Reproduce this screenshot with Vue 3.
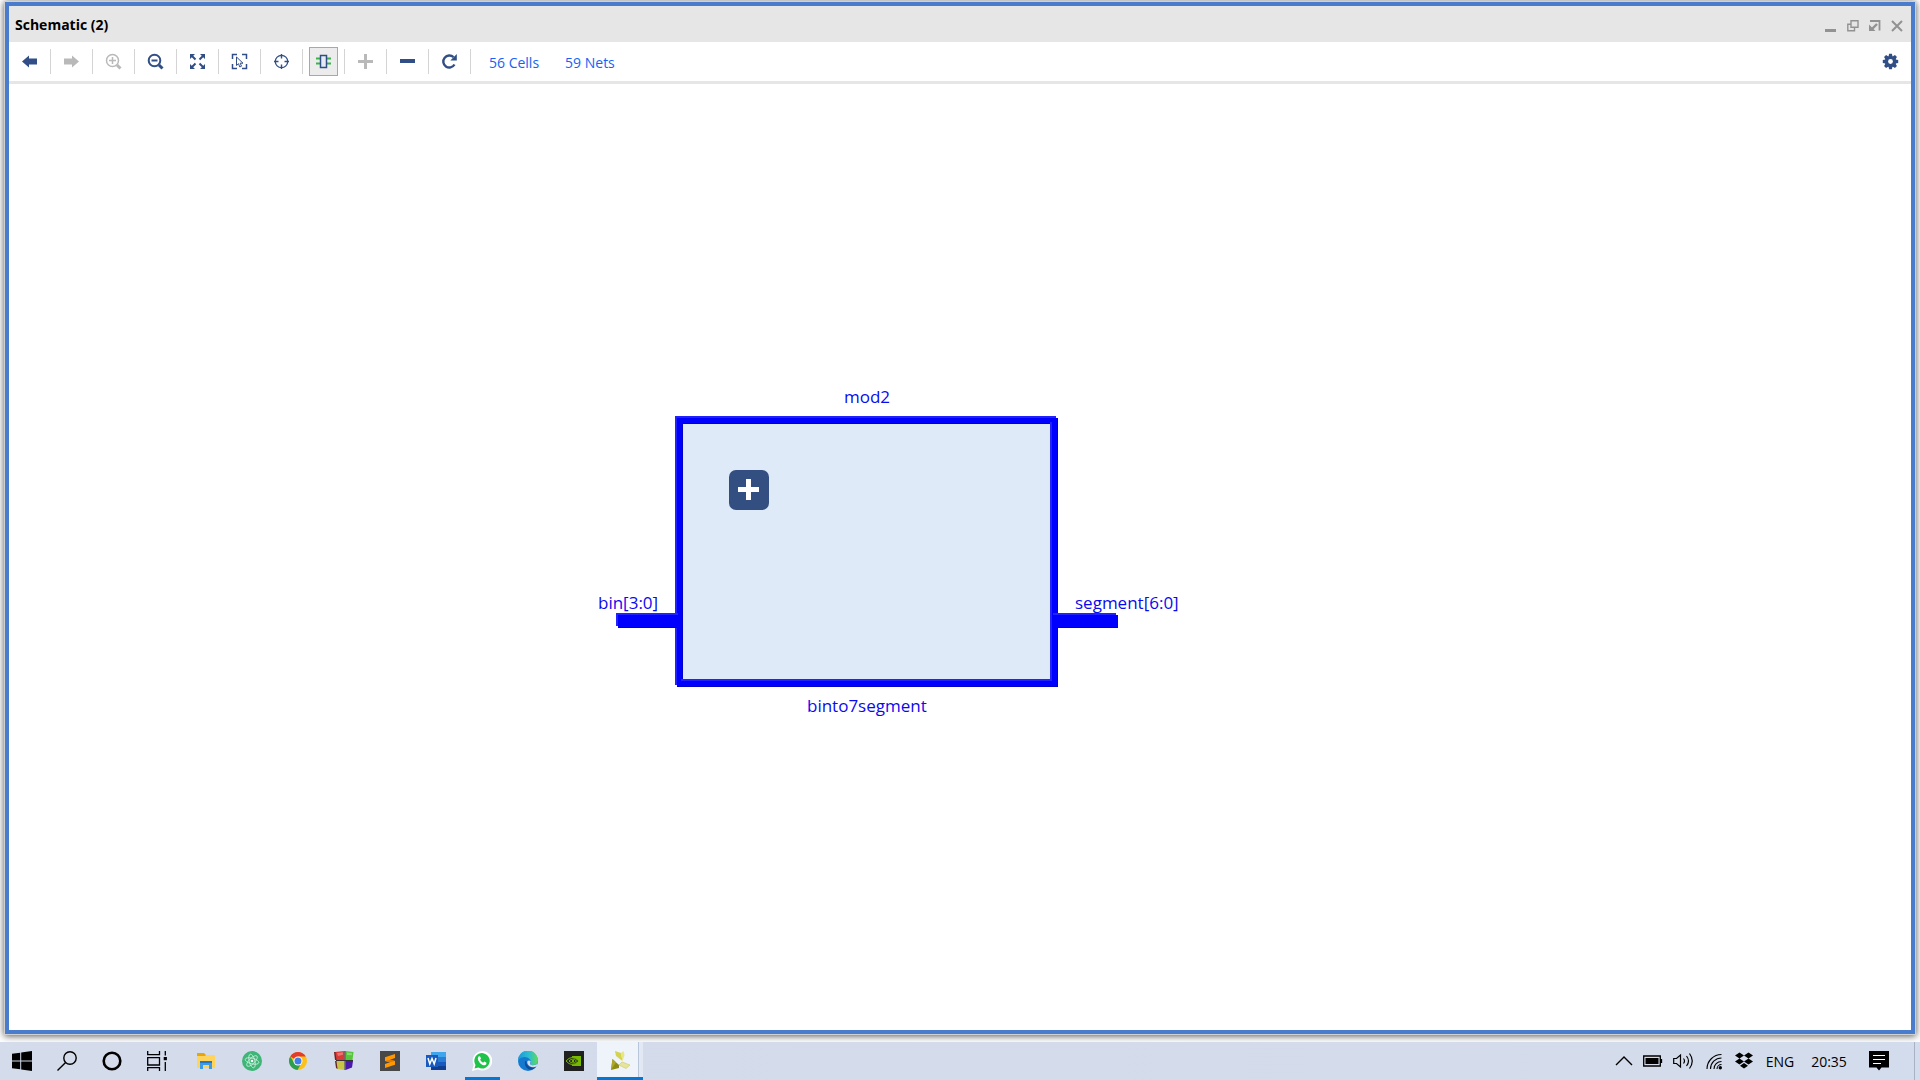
<script setup>
const tools = [
  { id: 'back', label: 'Back' },
  { id: 'forward', label: 'Forward', disabled: true },
  { id: 'zoom-in', label: 'Zoom in', disabled: true },
  { id: 'zoom-out', label: 'Zoom out' },
  { id: 'fit', label: 'Zoom fit' },
  { id: 'select', label: 'Zoom to selection' },
  { id: 'center', label: 'Autofit selection' },
  { id: 'cell', label: 'Expand cell', active: true },
  { id: 'plus', label: 'Add', disabled: true },
  { id: 'minus', label: 'Remove' },
  { id: 'reload', label: 'Regenerate' },
]

const apps = [
  { id: 'explorer', label: 'File Explorer' },
  { id: 'atom', label: 'Atom' },
  { id: 'chrome', label: 'Chrome' },
  { id: 'cube', label: 'Blocks' },
  { id: 'sublime', label: 'Sublime Text' },
  { id: 'word', label: 'Word' },
  { id: 'whatsapp', label: 'WhatsApp', running: true },
  { id: 'edge', label: 'Edge' },
  { id: 'nvidia', label: 'NVIDIA' },
  { id: 'vivado', label: 'Vivado', current: true },
]
</script>

<template>
  <div class="desktop">
    <main class="window">
      <header class="titlebar">
        <h1>Schematic (2)</h1>
        <div class="controls">
          <button aria-label="Minimize"><svg width="12" height="12"><path d="M0 10.500h11" stroke="#929292" stroke-width="3" /></svg></button>
          <button aria-label="Restore"><svg width="12" height="12" fill="none" stroke="#929292" stroke-width="1.400"><path d="M4 .8h7v6.500H4zM7.500 7.300v3.400H.8V4.200H4" /></svg></button>
          <button aria-label="Float"><svg width="12" height="12" fill="none" stroke="#929292"><path d="M1 1h9.500v9.500" stroke-width="1.800" /><path d="M8 4L3 9" stroke-width="2.400" /><path d="M0 4.500V11h6.500z" fill="#929292" stroke="none" /></svg></button>
          <button aria-label="Close"><svg width="12" height="12"><path d="M1 1l10 10M11 1L1 11" stroke="#929292" stroke-width="2" /></svg></button>
        </div>
      </header>

      <div class="toolbar">
        <div v-for="t in tools" :key="t.id" class="slot">
          <button class="tool" :class="{ active: t.active, disabled: t.disabled }" :aria-label="t.label" :disabled="t.disabled">
            <svg width="17" height="17" viewBox="0 0 17 17" fill="none" stroke="currentColor">
              <path v-if="t.id === 'back'" d="M1 8.500L8 2.500V5.500H16V11.500H8V14.500Z" fill="currentColor" stroke="none" />
              <path v-else-if="t.id === 'forward'" d="M16 8.500L9 2.500V5.500H1V11.500H9V14.500Z" fill="currentColor" stroke="none" />
              <template v-else-if="t.id === 'zoom-in'">
                <circle cx="7.500" cy="7.500" r="6" stroke-width="1.500" />
                <path d="M4 7.500h7M7.500 4v7" stroke-width="1.500" /><path d="M12 12l3.500 3.500" stroke-width="3" />
              </template>
              <template v-else-if="t.id === 'zoom-out'">
                <circle cx="7.500" cy="7.500" r="5.800" stroke-width="2" />
                <path d="M4.500 7.500h6" stroke-width="2" /><path d="M12 12l3.500 3.500" stroke-width="3" />
              </template>
              <template v-else-if="t.id === 'fit'">
                <path d="M1 1h5L1 6zM16 1v5L11 1zM1 16v-5l5 5zM16 16h-5l5-5z" fill="currentColor" stroke="none" />
                <path d="M2 2l4.500 4.500M15 2l-4.500 4.500M2 15l4.500-4.500M15 15l-4.500-4.500" stroke-width="2" />
              </template>
              <template v-else-if="t.id === 'select'">
                <path d="M1.500 6V1.500H6M11 1.500h4.500V6M15.500 11v4.500H11M6 15.500H1.500V11" stroke-width="1.500" />
                <path d="M5.500 4v8.500l2-1.800 1.300 3.300 1.700-.8-1.300-3H12z" fill="#fff" stroke-width="1" />
              </template>
              <template v-else-if="t.id === 'center'">
                <circle cx="8.500" cy="8.500" r="6.200" stroke-width="1.300" />
                <path d="M8.500 1v4.500M8.500 11.500V16M1 8.500h4.500M11.500 8.500H16" stroke-width="1.400" />
              </template>
              <template v-else-if="t.id === 'cell'">
                <path d="M1 5.500h4M1 10.500h4M12 5.500h4M12 10.500h4" stroke="#38b54a" stroke-width="2" />
                <path d="M5.500 2.500h6v12h-6z" fill="#e5eaf3" stroke-width="1.500" />
              </template>
              <path v-else-if="t.id === 'plus'" d="M1 8.500h15M8.500 1v15" stroke-width="3" />
              <path v-else-if="t.id === 'minus'" d="M1 8h15" stroke-width="4" />
              <template v-else>
                <path d="M13.500 11.500A6 6 0 1 1 12.500 4.200" stroke-width="2.400" />
                <path d="M15.800 1v6.500H9.300z" fill="currentColor" stroke="none" />
              </template>
            </svg>
          </button>
        </div>
        <nav class="stats">
          <a href="#cells">56 Cells</a>
          <a href="#nets">59 Nets</a>
        </nav>
        <button class="tool settings" aria-label="Settings">
          <svg width="17" height="17" viewBox="-8.500 -8.500 17 17">
            <g fill="currentColor">
              <path v-for="a in [0, 45, 90, 135]" :key="a" d="M-2-5l.6-2.700h2.800L2-5V5l-.6 2.700h-2.800L-2 5z" :transform="`rotate(${a})`" />
              <circle r="5.600" />
            </g>
            <circle r="2.400" fill="#fff" />
          </svg>
        </button>
      </div>

      <section class="canvas">
        <svg class="module" width="520" height="284" viewBox="598 410 520 284">
          <rect x="681" y="422" width="371" height="259" fill="#dfeaf8" />
          <path d="M675 416H1056V418H1058V687H677V685H675ZM683 424V679H1050V424Z" fill="#00f" fill-rule="evenodd" />
          <path d="M616 613H678V628H618V626H616ZM1053 613H1116V615H1118V628H1053Z" fill="#00f" />
          <path d="M675 417H1056M676 416V613M676 628V685M1051 422V679M681 680H1052M616 614H678M617 613V626M1053 614H1116" stroke="#2222ff" stroke-width="2" />
          <path d="M683 423.500H1050M682.500 424V679M1057.500 418V613M1057.500 628V687M677 686.500H1058M618 627.500H677M1058 627.500H1118" stroke="#0000cd" />
        </svg>
        <button class="expand" aria-label="Expand mod2"></button>
        <span class="label instance">mod2</span>
        <span class="label input">bin[3:0]</span>
        <span class="label output">segment[6:0]</span>
        <span class="label type">binto7segment</span>
      </section>
    </main>

    <footer class="taskbar">
      <div class="system">
        <button aria-label="Start"><svg width="20" height="20"><path d="M0 2.800L8.200 1.700V9.400H0zM9.200 1.500L20 0V9.400H9.200zM0 10.500H8.200V18.300L0 17.200zM9.200 10.500H20V20L9.200 18.500z" /></svg></button>
        <button aria-label="Search"><svg width="20" height="20" fill="none" stroke="#000" stroke-width="1.400"><circle cx="13" cy="7" r="6.200" /><path d="M8.600 11.400L.5 19.500" /></svg></button>
        <button aria-label="Cortana"><svg width="20" height="20"><circle cx="10" cy="10" r="8.300" fill="none" stroke="#000" stroke-width="2.600" /></svg></button>
        <button aria-label="Task View"><svg width="20" height="20" fill="none" stroke="#000" stroke-width="1.300"><path d="M.7 0V3.700H12.500V0M.7 6.700H12.500V14H.7zM.7 20V16.700H12.500V20M18.300 0V4.500M18.300 11V20" /><path d="M16.700 6h3.200v3.200h-3.200z" fill="#000" stroke="none" /></svg></button>
      </div>
      <div class="apps">
        <button v-for="a in apps" :key="a.id" :aria-label="a.label" :class="{ running: a.running, current: a.current }">
          <svg width="20" height="20" viewBox="0 0 20 20">
            <template v-if="a.id === 'explorer'">
              <path d="M1 2h7l2 2h9v6H1z" fill="#e5a50c" /><path d="M1 5h8l1-1h9v13H1z" fill="#ffd45c" />
              <path d="M4 10h12v8h-3v-4H7v4H4z" fill="#3b9be5" /><path d="M4 10h12v2H4z" fill="#2478c7" />
            </template>
            <template v-else-if="a.id === 'atom'">
              <circle cx="10" cy="10" r="10" fill="#3fb578" />
              <g fill="none" stroke="#c9f0da" stroke-width=".8"><ellipse v-for="r in [15, 75, 135]" :key="r" cx="10" cy="10" rx="7" ry="2.800" :transform="`rotate(${r} 10 10)`" /></g>
              <circle cx="10" cy="10" r="1.300" fill="#fff" />
            </template>
            <template v-else-if="a.id === 'chrome'">
              <circle cx="10" cy="10" r="9" fill="#fbc116" />
              <path d="M10 10L2.200 5.500A9 9 0 0 1 17.800 5.500H10z" fill="#e33b2e" />
              <path d="M2.200 5.500A9 9 0 0 0 9.500 19L13.500 12L10 10L6.300 12z" fill="#2b9f4c" />
              <circle cx="10" cy="10" r="4.500" fill="#fff" /><circle cx="10" cy="10" r="3.500" fill="#3f7ee8" />
            </template>
            <template v-else-if="a.id === 'cube'">
              <path d="M1 1l9.500-1v9H2z" fill="#d93a36" /><path d="M11.500 0l8 1-1 8h-7z" fill="#55c53c" />
              <path d="M2 10h8.500v9L3 18z" fill="#c8c445" /><path d="M11.500 10h7.500l-1 6.500-6.500 2.500z" fill="#4b18ad" />
              <path d="M0 1h1.500l1 8H1zM1 10h1.500l1 8L2 17z" fill="#6b2421" /><path d="M10.500 0h1v19h-1zM2 9h17v1H2z" fill="#333" />
              <path d="M3 2l6-.7v2.500L4 5zM13 1.500l5 .7v2L13 4z" fill="#fff" opacity=".3" />
            </template>
            <template v-else-if="a.id === 'sublime'">
              <path d="M0 0h20v20H0z" fill="#484848" />
              <path d="M15 3v4l-5 1.700 5 1.300v3.800L5 17v-4l5-1.700L5 10V6.200z" fill="#ff9800" />
              <path d="M5 10l5 1.300 5-1.300-5-1.300z" fill="#df7900" />
            </template>
            <template v-else-if="a.id === 'word'">
              <path d="M5 1h15v5H5z" fill="#41a5ee" /><path d="M5 6h15v5H5z" fill="#2b7cd3" /><path d="M5 11h15v4H5z" fill="#185abd" /><path d="M5 15h15v4H5z" fill="#103f91" />
              <path d="M0 4h12v12H0z" fill="#185abd" /><path d="M2 7l1.800 6L6 7.500 8.200 13 10 7" fill="none" stroke="#fff" stroke-width="1.500" />
            </template>
            <template v-else-if="a.id === 'whatsapp'">
              <path d="M1 19l1.500-5A9 9 0 1 1 6 17.600z" fill="#fff" stroke="#fff" stroke-width="1.500" />
              <path d="M2.500 17.500l1-3.600a7.700 7.700 0 1 1 2.900 2.700z" fill="#20c34a" />
              <path d="M6.500 5.500q1-.8 1.700.3l.8 1.700-.9 1.300q1 2 3 2.900l1.200-1.200 2.200 1.200q.3 2-2 2.500Q9 14.500 6.300 9.500 5.200 7 6.500 5.500z" fill="#fff" />
            </template>
            <template v-else-if="a.id === 'edge'">
              <defs>
                <linearGradient id="edge-top"><stop offset="0" stop-color="#2196d9" /><stop offset=".55" stop-color="#2bbfd0" /><stop offset="1" stop-color="#62d957" /></linearGradient>
              </defs>
              <circle cx="10" cy="10" r="10" fill="#147ad0" />
              <path d="M0 10a10 10 0 0 1 20-1q0 5-5 5-3 0-3-1.500 1.500-1 .5-3.500Q10 5.500 6 6 1.500 6.700 0 10z" fill="url(#edge-top)" />
              <path d="M7 10q-1 6 4 8.500 4 1 7.500-3-4 2-7.500 0-3-2-2.500-5z" fill="#0b4c9c" />
              <path d="M12 12q-.5 2 2.500 2.300 3 .2 5.500-1.800l-1.300 2.800q-3.700 2-7 0Q8.500 13 9.500 10q1.500-1 3 0 .5 1-.5 2z" fill="#d6dded" />
            </template>
            <template v-else-if="a.id === 'nvidia'">
              <path d="M0 0h20v20H0z" fill="#202020" /><path d="M8 5h9v10H8z" fill="#76b900" />
              <path d="M2 10Q8 3 15 10 8 17 2 10z" fill="#202020" stroke="#76b900" />
              <path d="M5 10q4-4 7.500 0Q9 14 5 10z" fill="none" stroke="#76b900" /><circle cx="9" cy="10" r="1.200" fill="#76b900" />
            </template>
            <template v-else>
              <path d="M5 0l6 2 1.500 8L6 5z" fill="#d4d34e" /><path d="M11 2l2.500-2L14.500 4 12.500 10z" fill="#e8e583" />
              <path d="M2.500 8L9 14v3l-8 2z" fill="#8e8c10" /><path d="M2.500 8l3.500 3.500L1 19z" fill="#aaa82a" />
              <path d="M9 14l3-3 8 3-4 3.500z" fill="#e7e59b" stroke="#cbc865" stroke-width=".6" />
            </template>
          </svg>
        </button>
      </div>
      <div class="tray">
        <button aria-label="Show hidden icons"><svg width="18" height="20"><path d="M1 14l8-8 8 8" fill="none" stroke="#000" stroke-width="1.400" /></svg></button>
        <button aria-label="Battery"><svg width="20" height="20"><path d="M.7 5h16.600v10H.7zM18.500 8v4" fill="none" stroke="#000" stroke-width="1.300" /><path d="M2.500 7h13v6h-13z" /></svg></button>
        <button aria-label="Volume"><svg width="21" height="20" fill="none" stroke="#000" stroke-width="1.200"><path d="M.7 7.500h2.800L7.500 4v12L3.500 12.500H.7zM10.500 7.500q2 2.500 0 5M13.500 5q4 5 0 10M16.500 2.500q5.500 7.500 0 15" /></svg></button>
        <button aria-label="Network"><svg width="20" height="20" fill="none" stroke="#000" stroke-width="1.100"><path d="M3 18A14.500 14.500 0 0 1 17.500 3.500M6.500 18A11 11 0 0 1 17.500 7M10 18A7.500 7.500 0 0 1 17.500 10.500M13 18A4.500 4.500 0 0 1 17.500 13.500" /><circle cx="16.300" cy="16.700" r="1.700" fill="#000" stroke="none" /></svg></button>
        <button aria-label="Dropbox"><svg width="20" height="20"><path d="M5.500 1.500L10 4.500 5.500 7.500 1 4.500zM14.500 1.500L19 4.500 14.500 7.500 10 4.500zM5.500 7.500L10 10.500 5.500 13.500 1 10.500zM14.500 7.500L19 10.500 14.500 13.500 10 10.500zM10 12L14 14.700 10 17.500 6 14.700z" /></svg></button>
        <button class="lang">ENG</button>
        <button class="clock">20:35</button>
        <button aria-label="Notifications"><svg width="20" height="20"><path d="M0 0h20v16.500h-7.500L10 19.500 7.500 16.500H0z" /><path d="M4 4.500h12M4 8.500h12M4 12.500h8" stroke="#fff" stroke-width="1.200" /></svg></button>
      </div>
    </footer>
  </div>
</template>

<style>
body {
  margin: 0;
}
</style>

<style scoped>
.desktop {
  display: flex;
  flex-direction: column;
  min-height: 100vh;
  background: #fff;
  font-family: "Open Sans", "Noto Sans", sans-serif;
  color: #000;
}
button {
  display: flex;
  align-items: center;
  justify-content: center;
  margin: 0;
  padding: 0;
  border: 0;
  background: none;
  color: inherit;
  font: inherit;
}
.window {
  display: flex;
  flex: 1;
  flex-direction: column;
  margin: 2px 5px 8px;
  border: 4px solid #4a7ccd;
  box-shadow: 0 0 0 1px #d0d0d0, 0 1px 7px 1px #555;
}
.titlebar {
  display: flex;
  align-items: center;
  justify-content: space-between;
  height: 36px;
  padding: 0 8px 0 6px;
  background: #e6e6e6;
}
h1 {
  margin: 0;
  padding-top: 2px;
  font-size: 14px;
  font-weight: 700;
  line-height: 20px;
}
.controls {
  display: flex;
  gap: 10px;
  padding-top: 4px;
}
.toolbar {
  display: flex;
  align-items: center;
  height: 39px;
  border-bottom: 3px solid #e6e6e6;
}
.slot {
  display: flex;
  align-items: center;
  height: 25px;
  padding: 0 6px;
  border-right: 1px solid #d4d4d4;
}
.tool {
  flex: none;
  width: 29px;
  height: 29px;
  color: #314f86;
}
.tool.active {
  border: 1px solid #a8a8a8;
  background: #ececec;
}
.tool.disabled {
  color: #b9b9b9;
}
.settings {
  margin: 0 6px 0 auto;
}
.stats {
  display: flex;
  gap: 26px;
  padding: 2px 0 0 18px;
  font-size: 14px;
  line-height: 20px;
}
.stats a {
  color: #1463f5;
  text-decoration: none;
}
.canvas {
  position: relative;
  flex: 1;
  min-height: 640px;
  background: #fff;
}
.module {
  position: absolute;
  left: 589px;
  top: 326px;
}
.label {
  position: absolute;
  color: #0a0af0;
  font-size: 17px;
  line-height: 24px;
  white-space: nowrap;
}
.instance {
  left: 835px;
  top: 301px;
}
.input {
  left: 589px;
  top: 507px;
}
.output {
  left: 1066px;
  top: 507px;
}
.type {
  left: 798px;
  top: 610px;
}
.expand {
  position: absolute;
  left: 720px;
  top: 386px;
  width: 40px;
  height: 40px;
  border-radius: 7px;
  background:
    linear-gradient(#fff, #fff) 9px 17px / 21px 5px no-repeat,
    linear-gradient(#fff, #fff) 17px 9px / 5px 21px no-repeat,
    #334f82;
}
.taskbar {
  display: flex;
  height: 38px;
  background: linear-gradient(90deg, #d4dbea, #d3dcec);
}
.system,
.apps,
.tray {
  display: flex;
}
.system button {
  width: 45px;
}
.system {
  margin-left: -1px;
}
.apps {
  margin-left: 4px;
}
.apps button {
  position: relative;
  width: 46px;
}
.apps .running::after {
  content: "";
  position: absolute;
  right: 5px;
  bottom: 0;
  left: 6px;
  height: 3px;
  background: #0078d7;
}
.apps .current {
  border-bottom: 3px solid #0078d7;
  padding-top: 3px;
  background: linear-gradient(90deg, #eff3fa 41px, #b9c5d9 41px, #b9c5d9 42px, #e2e9f4 42px);
}
.tray {
  align-items: center;
  gap: 10px;
  margin: 0 5px 0 auto;
  padding-right: 25px;
  border-right: 1px solid #a9b2c2;
  font-size: 14px;
}
.lang {
  width: 32px;
}
.clock {
  width: 38px;
  margin: 0 11px 0 4px;
}
</style>
